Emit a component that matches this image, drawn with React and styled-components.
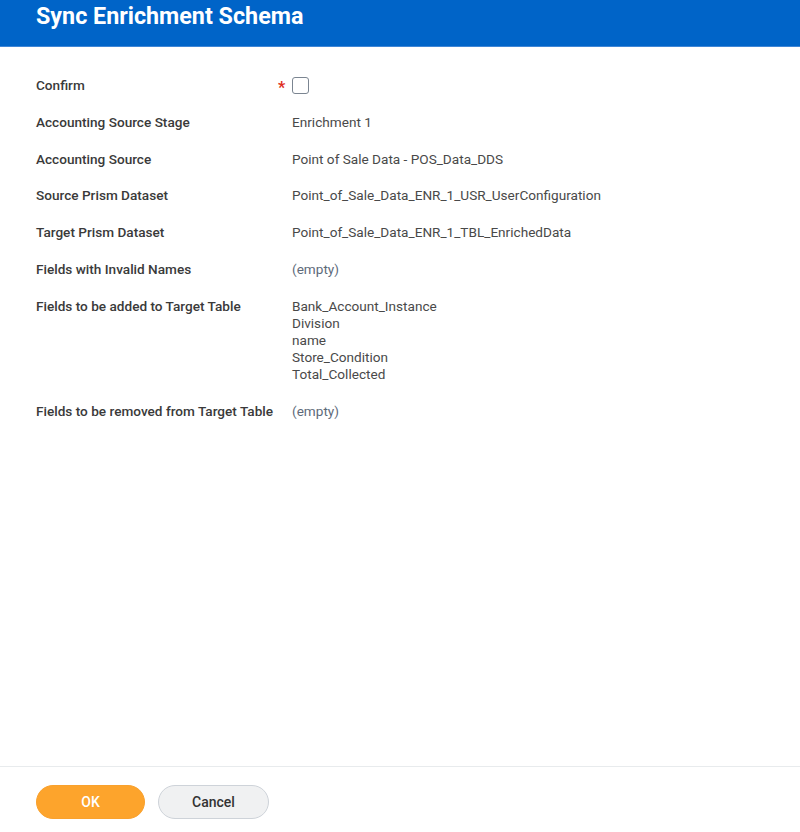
import React from 'react'
import styled, { createGlobalStyle } from 'styled-components'

const Global = createGlobalStyle`
  html, body, #root {
    height: 100%;
    margin: 0;
  }
  body {
    font-family: Roboto, "Liberation Sans", sans-serif;
    background: #fff;
  }
`

const Page = styled.div`
  display: flex;
  flex-direction: column;
  height: 100%;
`

const Header = styled.header`
  height: 46px;
  background: #0064c8;
  border-bottom: 1px solid #3f86d6;
  padding: 0 36px;
  box-sizing: content-box;
`

const Title = styled.h1`
  margin: 0;
  color: #fff;
  font-size: 23.3px;
  font-weight: 700;
  line-height: 32px;
`

const Body = styled.main`
  flex: 1;
  padding: 30px 36px 0;
  display: flex;
  flex-direction: column;
  gap: 19.8px;
`

const Row = styled.div`
  display: grid;
  grid-template-columns: 256px 1fr;
  align-items: start;
`

const Label = styled.div`
  font-size: 13.6px;
  font-weight: 500;
  color: #3a3a3a;
  line-height: 17px;
`

const Value = styled.div`
  font-size: 13.6px;
  color: ${p => (p.empty ? '#5e6a7a' : '#494949')};
  line-height: 17px;
  display: flex;
  flex-direction: column;
`

const Required = styled.div`
  position: relative;
  height: 17px;
  display: flex;
  align-items: center;
`

const Star = styled.span`
  position: absolute;
  left: -14px;
  top: 1px;
  color: #de2e21;
  font-size: 16px;
  font-weight: 700;
`

const Box = styled.input.attrs({ type: 'checkbox' })`
  appearance: none;
  margin: 0;
  width: 17px;
  height: 17px;
  border: 1px solid #7b8591;
  border-radius: 3px;
  background: #fff;
  box-sizing: border-box;
`

const Footer = styled.footer`
  height: 66px;
  box-sizing: border-box;
  border-top: 1px solid #e8ebed;
  padding: 4px 36px 0;
  display: flex;
  align-items: center;
  gap: 13px;
`

const Button = styled.button`
  width: ${p => (p.primary ? '109px' : '111px')};
  height: 34px;
  border-radius: 17px;
  font-family: inherit;
  font-size: 14px;
  font-weight: 500;
  border: 1px solid ${p => (p.primary ? '#f9a12d' : '#ced3d9')};
  background: ${p => (p.primary ? '#fda42c' : '#f0f1f2')};
  color: ${p => (p.primary ? '#fff' : '#333')};
`

const rows = [
  ['Accounting Source Stage', ['Enrichment 1']],
  ['Accounting Source', ['Point of Sale Data - POS_Data_DDS']],
  ['Source Prism Dataset', ['Point_of_Sale_Data_ENR_1_USR_UserConfiguration']],
  ['Target Prism Dataset', ['Point_of_Sale_Data_ENR_1_TBL_EnrichedData']],
  ['Fields with Invalid Names', null],
  ['Fields to be added to Target Table', ['Bank_Account_Instance', 'Division', 'name', 'Store_Condition', 'Total_Collected']],
  ['Fields to be removed from Target Table', null],
]

export default function App() {
  return (
    <Page>
      <Global />
      <Header>
        <Title>Sync Enrichment Schema</Title>
      </Header>
      <Body>
        <Row>
          <Label>Confirm</Label>
          <Required>
            <Star>*</Star>
            <Box />
          </Required>
        </Row>
        {rows.map(([label, values]) => (
          <Row key={label}>
            <Label>{label}</Label>
            {values ? (
              <Value>{values.map(v => <span key={v}>{v}</span>)}</Value>
            ) : (
              <Value empty>(empty)</Value>
            )}
          </Row>
        ))}
      </Body>
      <Footer>
        <Button primary>OK</Button>
        <Button>Cancel</Button>
      </Footer>
    </Page>
  )
}
